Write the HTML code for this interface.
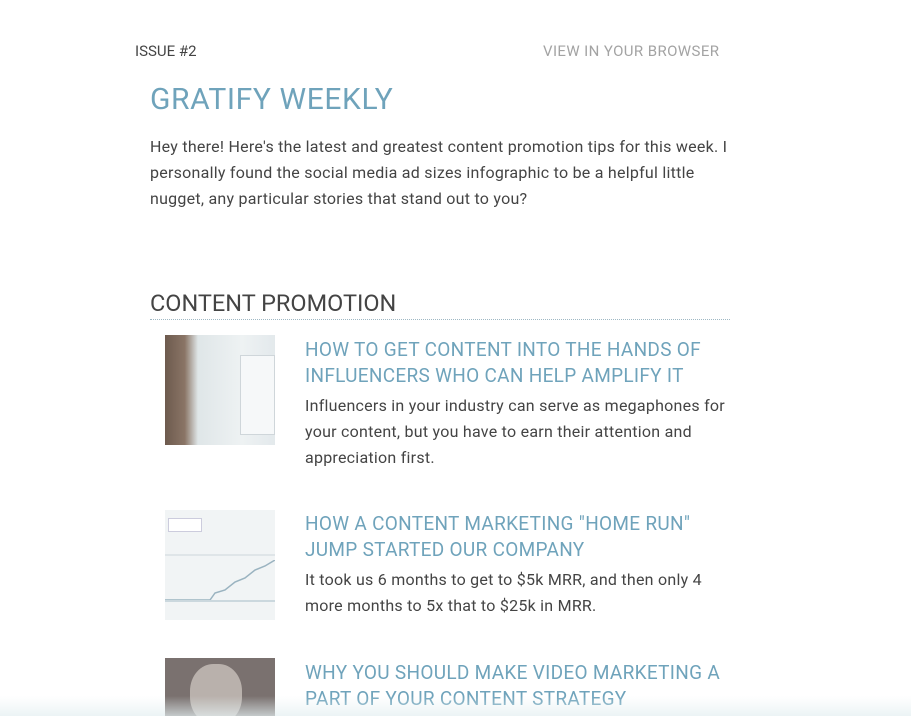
<!DOCTYPE html>
<html><head><meta charset="utf-8"><style>
*{margin:0;padding:0;box-sizing:border-box}
html,body{width:911px;height:716px;overflow:hidden}
body{background:#fff;font-family:"Roboto","Liberation Sans",sans-serif;position:relative}
.a{position:absolute;white-space:nowrap}
.t{color:#6fa3bb;font-size:19px;letter-spacing:.3px}
.b{color:#444;font-size:16px;letter-spacing:.25px}
.img{position:absolute;width:110px;height:110px;overflow:hidden}
</style></head><body>
<div class="a" style="left:135px;top:42px;font-size:15px;color:#444">ISSUE #2</div>
<div class="a" style="left:543px;top:42px;font-size:15px;color:#a3a3a3;letter-spacing:.4px">VIEW IN YOUR BROWSER</div>
<div class="a" style="left:150px;top:82px;font-size:30px;color:#6fa3bb;letter-spacing:.6px">GRATIFY WEEKLY</div>
<div class="a b" style="left:150px;top:134px;line-height:26px">Hey there! Here's the latest and greatest content promotion tips for this week. I<br>personally found the social media ad sizes infographic to be a helpful little<br>nugget, any particular stories that stand out to you?</div>
<div class="a" style="left:150px;top:289px;font-size:23.5px;color:#444">CONTENT PROMOTION</div>
<div class="a" style="left:150px;top:319px;width:580px;border-top:1px dotted #9fb8c4"></div>

<div class="img" style="left:165px;top:335px;background:linear-gradient(90deg,#6d5a4e 0,#8a7566 18%,#dfe6e8 30%,#eef2f3 70%,#e3e9ec 100%)">
<div style="position:absolute;left:75px;top:20px;width:35px;height:80px;background:#f6f8f9;border:1px solid #cfd6da"></div></div>
<div class="a t" style="left:305px;top:337px;line-height:26px">HOW TO GET CONTENT INTO THE HANDS OF<br>INFLUENCERS WHO CAN HELP AMPLIFY IT</div>
<div class="a b" style="left:305px;top:393px;line-height:26px">Influencers in your industry can serve as megaphones for<br>your content, but you have to earn their attention and<br>appreciation first.</div>

<div class="img" style="left:165px;top:510px;background:#f1f4f5">
<div style="position:absolute;left:0;top:44px;width:110px;height:2px;background:#dfe5e8"></div>
<div style="position:absolute;left:3px;top:8px;width:34px;height:14px;background:#fff;border:1px solid #ccd"></div>
<svg style="position:absolute;left:0;top:50px" width="110" height="50"><polyline points="0,40 45,40 50,33 60,30 70,22 80,18 90,10 100,6 110,0" fill="none" stroke="#9ab3c0" stroke-width="1.5"/><line x1="0" y1="41" x2="110" y2="41" stroke="#cbd8de" stroke-width="2"/></svg></div>
<div class="a t" style="left:305px;top:511px;line-height:26px">HOW A CONTENT MARKETING "HOME RUN"<br>JUMP STARTED OUR COMPANY</div>
<div class="a b" style="left:305px;top:567px;line-height:26px">It took us 6 months to get to $5k MRR, and then only 4<br>more months to 5x that to $25k in MRR.</div>

<div class="img" style="left:165px;top:658px;height:58px;background:#7a716f">
<div style="position:absolute;left:25px;top:6px;width:52px;height:60px;border-radius:45%;background:#b9b1ac"></div></div>
<div class="a t" style="left:305px;top:660px;line-height:26px">WHY YOU SHOULD MAKE VIDEO MARKETING A<br>PART OF YOUR CONTENT STRATEGY</div>
<div style="position:absolute;left:0;top:696px;width:911px;height:20px;background:linear-gradient(rgba(235,243,245,0),rgba(228,239,241,.7))"></div>
</body></html>
